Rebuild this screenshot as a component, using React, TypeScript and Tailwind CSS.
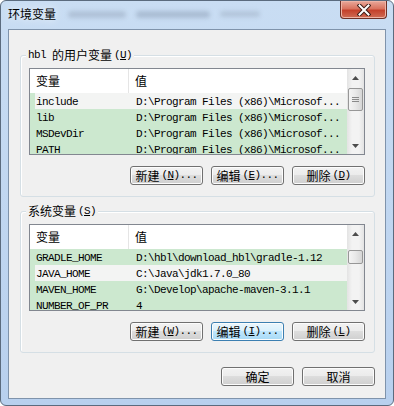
import React from 'react';

const mono = "font-['Liberation_Mono',monospace] text-[11px] tracking-[-0.6px]";
const cjk = "font-['Noto_Sans_CJK_SC',sans-serif] text-[12px]";

type Row = { name: string; value: string; light?: boolean };

const userRows: Row[] = [
  { name: 'include', value: 'D:\\Program Files (x86)\\Microsof...', light: true },
  { name: 'lib', value: 'D:\\Program Files (x86)\\Microsof...' },
  { name: 'MSDevDir', value: 'D:\\Program Files (x86)\\Microsof...' },
  { name: 'PATH', value: 'D:\\Program Files (x86)\\Microsof...' },
];

const sysRows: Row[] = [
  { name: 'GRADLE_HOME', value: 'D:\\hbl\\download_hbl\\gradle-1.12' },
  { name: 'JAVA_HOME', value: 'C:\\Java\\jdk1.7.0_80', light: true },
  { name: 'MAVEN_HOME', value: 'G:\\Develop\\apache-maven-3.1.1' },
  { name: 'NUMBER_OF_PR', value: '4' },
];

function Key({ k }: { k: string }) {
  return (
    <span className={mono + ' ml-[2px]'}>
      (<span className="underline underline-offset-1">{k}</span>)
    </span>
  );
}

function Btn({ label, k, dots, focused }: { label: string; k?: string; dots?: boolean; focused?: boolean }) {
  return (
    <div
      className={
        'w-[73px] h-[19px] rounded-[3px] border flex items-center justify-center text-black shadow-[inset_0_0_0_1px_#fcfcfc] ' +
        (focused
          ? 'border-[#3c7fb1] bg-[linear-gradient(to_bottom,#eaf6fd_0%,#d9f0fc_50%,#bee6fd_50%,#a7d9f5_100%)]'
          : 'border-[#707070] bg-[linear-gradient(to_bottom,#f2f2f2_0%,#ebebeb_50%,#dddddd_50%,#cfcfcf_100%)]')
      }
    >
      <span className={cjk + ' leading-[14px]'}>{label}</span>
      {k && <Key k={k} />}
      {dots && <span className={mono}>...</span>}
    </div>
  );
}

function Arrow({ up }: { up?: boolean }) {
  return (
    <div className="h-[17px] flex items-center justify-center">
      <svg width="7" height="4" viewBox="0 0 7 4">
        <path d={up ? 'M3.5 0 L7 4 L0 4 Z' : 'M0 0 L7 0 L3.5 4 Z'} fill="#4d4d4d" />
      </svg>
    </div>
  );
}

function ScrollBar({ top, h, grip }: { top: number; h: number; grip?: boolean }) {
  return (
    <div className="w-[17px] shrink-0 flex flex-col bg-[linear-gradient(to_right,#e3e3e3,#f3f3f3_30%,#f3f3f3_70%,#e3e3e3)]">
      <Arrow up />
      <div className="flex-1 flex flex-col">
        <div
          className="mx-[1px] rounded-[2px] border border-[#979797] bg-[linear-gradient(to_right,#f4f4f4,#e8e8e8_50%,#d6d6d6)] flex flex-col items-center justify-center gap-[1px]"
          style={{ marginTop: top, height: h }}
        >
          {grip && (
            <>
              <div className="w-[7px] h-[1px] bg-[#8a8a8a]" />
              <div className="w-[7px] h-[1px] bg-[#8a8a8a]" />
              <div className="w-[7px] h-[1px] bg-[#8a8a8a]" />
            </>
          )}
        </div>
      </div>
      <Arrow />
    </div>
  );
}

function VarList({ rows, top, h, grip }: { rows: Row[]; top: number; h: number; grip?: boolean }) {
  return (
    <div className="flex h-[87px] border border-[#828790] bg-[#cce8cf] overflow-hidden">
      <div className="flex-1 min-w-0 flex flex-col">
        <div className="h-[24px] shrink-0 flex bg-white">
          <div className={cjk + ' w-[99px] pl-[6px] border-r border-[#e5e5e5] flex items-center'}>变量</div>
          <div className={cjk + ' pl-[6px] flex items-center'}>值</div>
        </div>
        {rows.map((r) => (
          <div
            key={r.name}
            className={'ml-[5px] h-[16px] shrink-0 flex items-center pt-[2px] text-black ' + (r.light ? 'bg-[#f3f4f3]' : '')}
          >
            <div className={mono + ' w-[101px] pl-[1px] whitespace-nowrap overflow-hidden'}>{r.name}</div>
            <div className={mono + ' whitespace-nowrap'}>{r.value}</div>
          </div>
        ))}
      </div>
      <ScrollBar top={top} h={h} grip={grip} />
    </div>
  );
}

function Group({ title, children }: { title: React.ReactNode; children: React.ReactNode }) {
  return (
    <div className="relative ml-[11px] mr-[10px] border border-[#d5dfe5] rounded-[3px] shadow-[inset_1px_1px_0_#fff] pt-[12px] pb-[11px] pl-[8px] pr-[9px]">
      <div className="absolute left-[5px] top-[-8px] px-[2px] bg-[#f0f0f0] h-[14px] flex items-center text-black">
        {title}
      </div>
      {children}
    </div>
  );
}

export default function App() {
  return (
    <div className="w-[394px] h-[406px] flex flex-col border border-[#5b6b7e] rounded-[6px] bg-[linear-gradient(to_bottom,#c9ddf3,#b8d0ee)] overflow-hidden">
      <div className="h-[28px] shrink-0 flex items-start justify-between">
        <div className="flex items-center pl-[7px] pt-[6px] gap-[12px]">
          <span className={cjk + ' leading-[14px] text-black [text-shadow:0_0_8px_#fff]'}>环境变量</span>
          <div className="flex gap-[10px] items-center opacity-40">
            <div className="w-[58px] h-[7px] rounded bg-[#8b9bb0] blur-[2px]" />
            <div className="w-[74px] h-[7px] rounded bg-[#7d8ea6] blur-[2px]" />
            <div className="w-[40px] h-[6px] rounded bg-[#93a3b7] blur-[2px]" />
          </div>
        </div>
        <div className="mr-[6px] w-[47px] h-[18px] rounded-b-[4px] border border-t-0 border-[#6d3027] bg-[linear-gradient(to_bottom,#e9a99b_0%,#d9735f_45%,#c4412c_55%,#cf6c55_100%)] flex items-center justify-center shadow-[inset_0_0_0_1px_#eeb4a6]">
          <svg width="14" height="12" viewBox="0 0 14 12">
            <path d="M2.5 1.5 L11.5 10.5 M11.5 1.5 L2.5 10.5" stroke="#3b1c17" strokeWidth="4" strokeLinecap="square" />
            <path d="M2.5 1.5 L11.5 10.5 M11.5 1.5 L2.5 10.5" stroke="#ffffff" strokeWidth="2" strokeLinecap="square" />
          </svg>
        </div>
      </div>

      <div className="mx-[7px] h-[370px] shrink-0 border border-[#7f93ab] bg-[#f0f0f0] flex flex-col">
        <div className="mt-[25px]">
          <Group
            title={
              <>
                <span className={mono + ' mr-[6px]'}>hbl</span>
                <span className={cjk + ' leading-[14px]'}>的用户变量</span>
                <Key k="U" />
              </>
            }
          >
            <VarList rows={userRows} top={2} h={23} grip />
            <div className="mt-[11px] flex justify-end gap-[8px]">
              <Btn label="新建" k="N" dots />
              <Btn label="编辑" k="E" dots />
              <Btn label="删除" k="D" />
            </div>
          </Group>
        </div>

        <div className="mt-[14px]">
          <Group
            title={
              <>
                <span className={cjk + ' leading-[14px]'}>系统变量</span>
                <Key k="S" />
              </>
            }
          >
            <VarList rows={sysRows} top={8} h={14} />
            <div className="mt-[11px] flex justify-end gap-[8px]">
              <Btn label="新建" k="W" dots />
              <Btn label="编辑" k="I" dots focused />
              <Btn label="删除" k="L" />
            </div>
          </Group>
        </div>

        <div className="mt-[14px] mr-[10px] flex justify-end gap-[8px]">
          <Btn label="确定" />
          <Btn label="取消" />
        </div>
      </div>
    </div>
  );
}
